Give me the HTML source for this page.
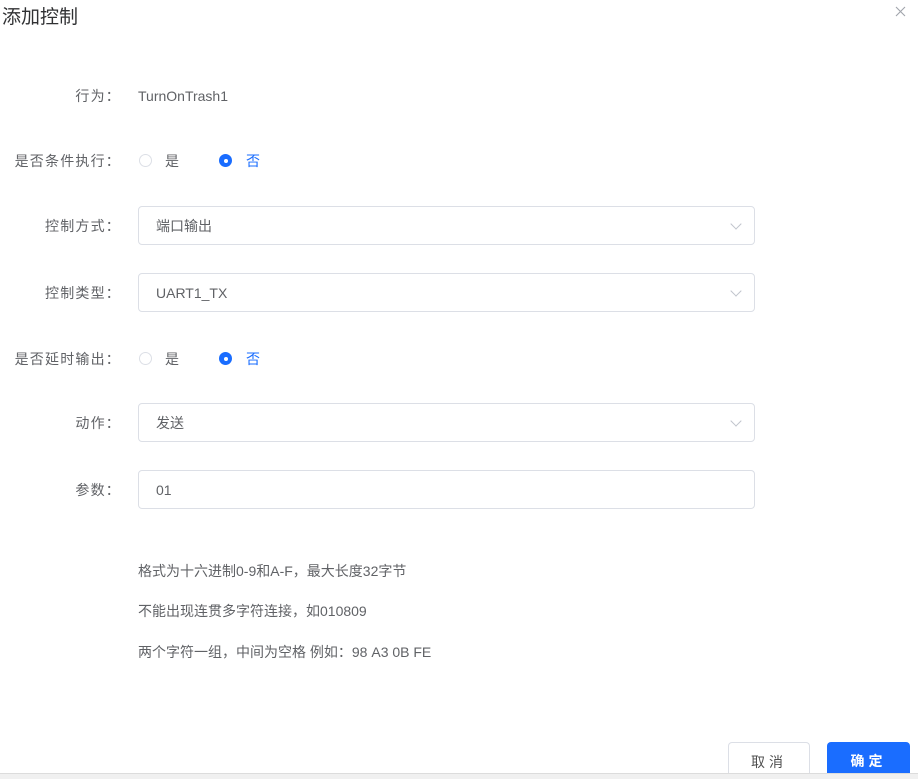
<!DOCTYPE html><html><head><meta charset="utf-8"><style>
body{margin:0;width:918px;height:778px;background:#fff;position:relative;overflow:hidden;font-family:"Liberation Sans","Noto Sans CJK SC",sans-serif;font-size:14px;color:#606266}
.a{position:absolute}
.lbl{position:absolute;right:797px;text-align:right;white-space:nowrap;line-height:20px;font-size:14px;letter-spacing:1.2px}
.box{position:absolute;left:138px;width:615px;height:37px;border:1px solid #dcdfe6;border-radius:4px;box-sizing:content-box}
.box span{position:absolute;left:17px;top:9px;line-height:20px;color:#606266}
.arr{position:absolute;right:14px;top:13px;width:7px;height:7px;border-right:1px solid #c0c4cc;border-bottom:1px solid #c0c4cc;transform:rotate(45deg)}
.r{position:absolute;width:13px;height:13px;border:1px solid #dcdfe6;border-radius:50%;box-sizing:border-box}
.r.on{background:#1a6dff;border-color:#1a6dff}
.r.on:after{content:"";position:absolute;left:3.5px;top:3.5px;width:4px;height:4px;border-radius:50%;background:#fff}
</style></head><body>
<div class="a" style="left:2px;top:5px;font-size:19px;color:#303133;line-height:26px">添加控制</div>
<svg class="a" style="left:895px;top:6px" width="11" height="11" viewBox="0 0 11 11"><path d="M1 1L10 10M10 1L1 10" stroke="#a0a4ab" stroke-width="1.1"/></svg>
<div class="lbl" style="top:86px">行为：</div>
<div class="a" style="left:138px;top:86px;line-height:20px">TurnOnTrash1</div>
<div class="lbl" style="top:151px">是否条件执行：</div>
<div class="r" style="left:139px;top:154px"></div><div class="a" style="left:165px;top:151px;line-height:20px">是</div>
<div class="r on" style="left:219px;top:154px"></div><div class="a" style="left:246px;top:151px;line-height:20px;color:#1a6dff">否</div>
<div class="lbl" style="top:216px">控制方式：</div>
<div class="box" style="top:206px"><span>端口输出</span><i class="arr"></i></div>
<div class="lbl" style="top:283px">控制类型：</div>
<div class="box" style="top:273px"><span>UART1_TX</span><i class="arr"></i></div>
<div class="lbl" style="top:349px">是否延时输出：</div>
<div class="r" style="left:139px;top:352px"></div><div class="a" style="left:165px;top:349px;line-height:20px">是</div>
<div class="r on" style="left:219px;top:352px"></div><div class="a" style="left:246px;top:349px;line-height:20px;color:#1a6dff">否</div>
<div class="lbl" style="top:413px">动作：</div>
<div class="box" style="top:403px"><span>发送</span><i class="arr"></i></div>
<div class="lbl" style="top:480px">参数：</div>
<div class="box" style="top:470px"><span>01</span></div>
<div class="a" style="left:138px;top:561px;line-height:20px">格式为十六进制0-9和A-F，最大长度32字节</div>
<div class="a" style="left:138px;top:601px;line-height:20px">不能出现连贯多字符连接，如010809</div>
<div class="a" style="left:138px;top:642px;line-height:20px">两个字符一组，中间为空格 例如：98 A3 0B FE</div>
<div class="a" style="left:728px;top:742px;width:80px;height:31px;border:1px solid #dcdfe6;border-bottom:none;border-radius:4px 4px 0 0;text-align:center;line-height:38px;color:#505050;letter-spacing:4px">取消</div>
<div class="a" style="left:827px;top:742px;width:83px;height:31px;background:#1a6dff;border-radius:4px 4px 0 0;text-align:center;line-height:38px;color:#fff;font-weight:bold;letter-spacing:4px;overflow:hidden">确定</div>
<div class="a" style="left:0;top:773px;width:918px;height:5px;background:#f0f0f0;border-top:1px solid #dcdcdc"></div>
</body></html>
